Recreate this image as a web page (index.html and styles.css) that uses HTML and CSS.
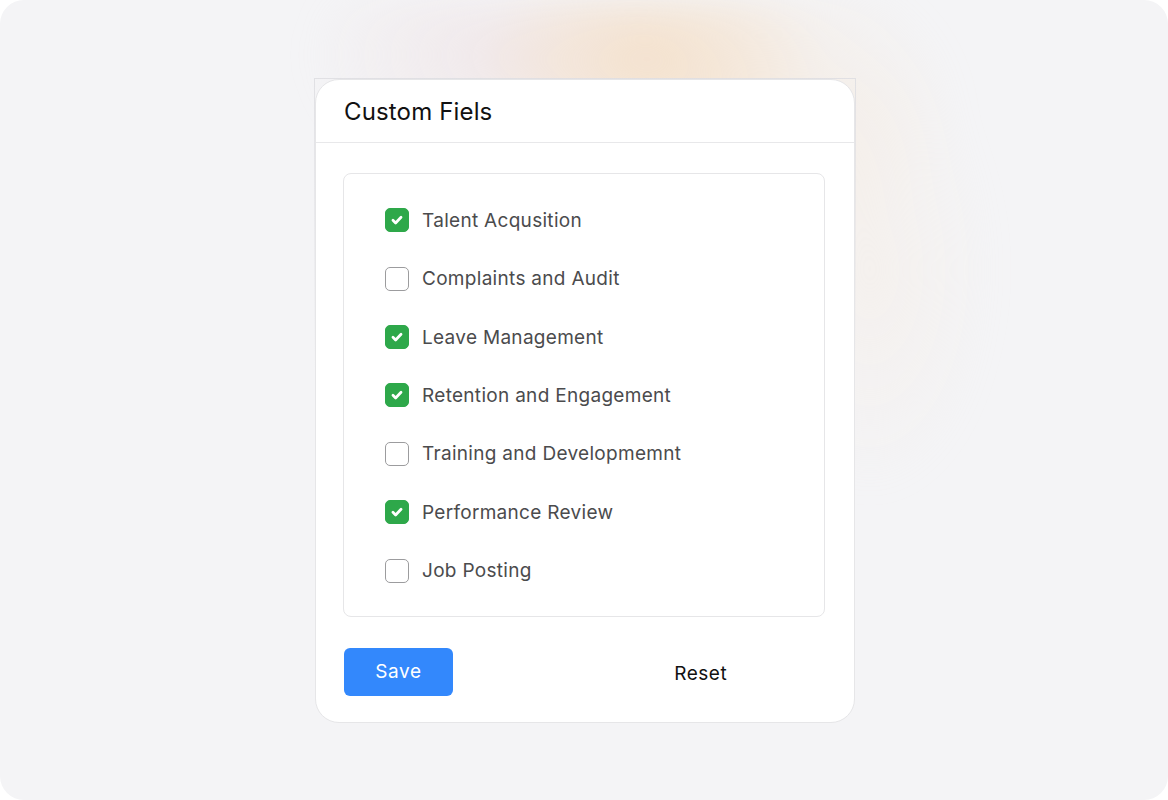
FILE: index.html
```html
<!DOCTYPE html>
<html lang="en">
<head>
<meta charset="utf-8">
<title>Custom Fiels</title>
<link rel="stylesheet" href="styles.css">
</head>
<body>
<div class="frame">
  <div class="glow"></div>
  <div class="outline">
    <section class="card">
      <header class="card-head"><h1 class="title">Custom Fiels</h1></header>
      <div class="card-body">
        <div class="list">
          <label class="row"><span class="box checked"><svg viewBox="0 0 24 24" class="tick"><path d="M7.6 12.3l2.9 2.9 5.9-6.2" /></svg></span><span class="label">Talent Acqusition</span></label>
          <label class="row"><span class="box"></span><span class="label">Complaints and Audit</span></label>
          <label class="row"><span class="box checked"><svg viewBox="0 0 24 24" class="tick"><path d="M7.6 12.3l2.9 2.9 5.9-6.2" /></svg></span><span class="label">Leave Management</span></label>
          <label class="row"><span class="box checked"><svg viewBox="0 0 24 24" class="tick"><path d="M7.6 12.3l2.9 2.9 5.9-6.2" /></svg></span><span class="label">Retention and Engagement</span></label>
          <label class="row"><span class="box"></span><span class="label">Training and Developmemnt</span></label>
          <label class="row"><span class="box checked"><svg viewBox="0 0 24 24" class="tick"><path d="M7.6 12.3l2.9 2.9 5.9-6.2" /></svg></span><span class="label">Performance Review</span></label>
          <label class="row"><span class="box"></span><span class="label">Job Posting</span></label>
        </div>
        <div class="actions">
          <button class="btn-save">Save</button>
          <button class="btn-reset">Reset</button>
        </div>
      </div>
    </section>
  </div>
</div>
</body>
</html>
```

FILE: styles.css
```css
* { box-sizing: border-box; }
html, body { margin: 0; padding: 0; background: #ffffff; }
body { font-family: Inter, "Noto Sans", sans-serif; }

.frame {
  position: relative;
  width: 1168px;
  height: 800px;
  border-radius: 24px;
  background: #f4f4f6;
  overflow: hidden;
  display: flex;
  justify-content: center;
  padding-top: 78px;
  padding-left: 2px;
}

.glow {
  position: absolute;
  left: 0; top: 0; width: 1168px; height: 800px;
  background:
    radial-gradient(ellipse 170px 110px at 650px 55px, rgba(244, 222, 198, 0.8), rgba(244, 222, 198, 0) 100%),
    radial-gradient(ellipse 250px 170px at 710px 110px, rgba(246, 228, 208, 0.55), rgba(246, 228, 208, 0) 100%),
    radial-gradient(ellipse 190px 130px at 500px 55px, rgba(238, 224, 226, 0.6), rgba(238, 224, 226, 0) 100%),
    radial-gradient(ellipse 120px 220px at 870px 270px, rgba(246, 236, 226, 0.45), rgba(246, 236, 226, 0) 100%);
  filter: blur(16px);
}

.outline {
  position: relative;
  width: 542px;
  height: 646px;
  border: 1px solid transparent;
  border-image: linear-gradient(to bottom, rgba(222, 222, 226, 0.9), rgba(222, 222, 226, 0.4) 25%, rgba(222, 222, 226, 0) 45%) 1;
}

.card {
  width: 540px;
  height: 644px;
  background: #ffffff;
  border: 1px solid #e6e6e8;
  border-radius: 24px;
  display: flex;
  flex-direction: column;
}

.card-head {
  height: 63px;
  border-bottom: 1px solid #e8e8ea;
  display: flex;
  align-items: center;
  padding-left: 28px;
}

.title {
  margin: 0;
  font-size: 24px;
  font-weight: 400;
  color: #111111;
  letter-spacing: 0.15px;
}

.card-body {
  padding: 30px 29px 0 27px;
  display: flex;
  flex-direction: column;
}

.list {
  height: 444px;
  border: 1px solid #e6e6e8;
  border-radius: 8px;
  padding: 17px 0 16px 41px;
  display: flex;
  flex-direction: column;
}

.row {
  height: 58.5px;
  display: flex;
  align-items: center;
  gap: 13px;
}

.box {
  width: 24px;
  height: 24px;
  border-radius: 5px;
  border: 1.5px solid #9c9c9e;
  background: #fff;
  display: flex;
  align-items: center;
  justify-content: center;
}

.box.checked {
  background: #2ea84a;
  border-color: #2ea84a;
}

.tick { width: 22px; height: 22px; }
.tick path {
  fill: none;
  stroke: #ffffff;
  stroke-width: 3;
  stroke-linecap: round;
  stroke-linejoin: round;
}

.label {
  font-size: 19px;
  color: #4b4b4d;
  letter-spacing: 0.3px;
}

.actions {
  margin-top: 31px;
  display: grid;
  grid-template-columns: 1fr 1fr;
  align-items: center;
  padding-left: 1px;
}

.btn-save {
  width: 109px;
  height: 48px;
  border: none;
  border-radius: 6px;
  background: #3388fc;
  color: #ffffff;
  font-family: inherit;
  font-size: 19px;
  letter-spacing: 0.6px;
  font-weight: 400;
  padding: 0;
  padding-bottom: 2px;
}

.btn-reset {
  justify-self: center;
  margin-right: 8px;
  border: none;
  background: transparent;
  font-family: inherit;
  font-size: 19px;
  letter-spacing: 0.5px;
  color: #111111;
  padding: 0;
  margin-top: 3px;
}
```
